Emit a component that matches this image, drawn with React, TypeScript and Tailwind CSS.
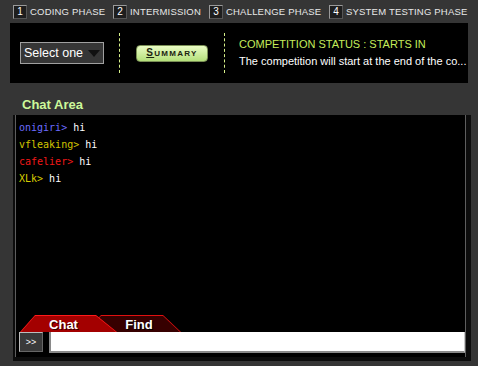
import React from 'react';

const phases = [
  { n: '1', label: 'CODING PHASE', w: 'w-[100px]' },
  { n: '2', label: 'INTERMISSION', w: 'w-[96px]' },
  { n: '3', label: 'CHALLENGE PHASE', w: 'w-[120px]' },
  { n: '4', label: 'SYSTEM TESTING PHASE', w: 'w-auto' },
];

const messages = [
  { user: 'onigiri', color: 'text-[#6b6bff]' },
  { user: 'vfleaking', color: 'text-[#d2c400]' },
  { user: 'cafelier', color: 'text-[#f01818]' },
  { user: 'XLk', color: 'text-[#d8cc00]' },
];

const PhaseItem: React.FC<{ n: string; label: string; w: string }> = ({ n, label, w }) => (
  <div className={`flex shrink-0 items-center gap-[3px] whitespace-nowrap ${w}`}>
    <div className="w-[14px] h-[14px] bg-[#1e1e1e] border border-t-[#9a9a9a] border-l-[#9a9a9a] border-r-[#555] border-b-[#555] flex items-center justify-center text-[10px] leading-none text-white">
      {n}
    </div>
    <span className="text-[9.5px] tracking-[0.2px] text-[#e8e8e8]">{label}</span>
  </div>
);

const DashedRule = () => <div className="h-[40px] border-l border-dashed border-[#d6f08a]" />;

export default function App() {
  return (
    <div className="w-[478px] h-[366px] bg-[#353535] overflow-hidden font-['Liberation_Sans',Arial,sans-serif]">
      {/* phase bar */}
      <div className="h-[23px] flex items-center pl-[13px] pt-[1px]">
        {phases.map((p) => (
          <PhaseItem key={p.n} {...p} />
        ))}
      </div>

      {/* status panel */}
      <div className="mx-[10px] h-[60px] bg-black flex items-center">
        <div className="ml-[10px] shrink-0 w-[84px] h-[22px] bg-[#363636] border border-[#a0a0a0] flex items-center pl-[3px] gap-[5px] whitespace-nowrap">
          <span className="text-[12.5px] leading-none text-white">Select one</span>
          <svg width="12" height="7" viewBox="0 0 12 7">
            <path d="M0 0 H12 L6 7 Z" fill="#111" />
          </svg>
        </div>
        <div className="ml-[15px]">
          <DashedRule />
        </div>
        <div className="ml-[16px] shrink-0 w-[72px] h-[17px] rounded-[4px] border border-[#7a8f55] bg-gradient-to-b from-[#eafcc4] to-[#b4e07a] flex items-center justify-center">
          <span className="text-[8px] font-bold tracking-[1.3px] text-[#1c2410] leading-none">
            <span className="underline text-[10px]">S</span>UMMARY
          </span>
        </div>
        <div className="ml-[16px]">
          <DashedRule />
        </div>
        <div className="ml-[14px] flex flex-col gap-[4px] whitespace-nowrap">
          <span className="text-[11px] leading-[13px] text-[#c4ec5a]">COMPETITION STATUS : STARTS IN</span>
          <span className="text-[11px] leading-[13px] text-white">The competition will start at the end of the co...</span>
        </div>
      </div>

      {/* chat title */}
      <div className="h-[32px] flex items-end pl-[22px] pb-[4px]">
        <span className="text-[13px] font-bold leading-none text-[#ccf99a]">Chat Area</span>
      </div>

      {/* chat box */}
      <div className="ml-[13px] w-[458px] h-[246px] bg-[#0c0c0c] flex flex-col pl-[2px] pr-[5px] pb-[4px]">
        <div className="flex-1 bg-black border-l border-r border-[#5e5e5e] flex flex-col pb-[4px]">
          <div className="flex-1 pl-[3px] pt-[4px] font-['DejaVu_Sans_Mono',monospace] text-[10px]">
            {messages.map((m) => (
              <div key={m.user} className="h-[17px] leading-[17px] whitespace-pre">
                <span className={m.color}>{m.user}&gt;</span>
                <span className="text-white"> hi</span>
              </div>
            ))}
          </div>

          {/* tabs */}
          <div className="flex h-[17px] pl-[4px]">
            <div className="relative z-10 w-[97px] h-[17px] bg-[#ff1a1a] [clip-path:polygon(15px_0,76px_0,97px_100%,0_100%)] pt-[1px]">
              <div className="h-full bg-[#a30000] [clip-path:polygon(15px_0,76px_0,96px_100%,1px_100%)] flex items-center justify-center pr-[10px]">
                <span className="text-[13px] font-bold text-white leading-none [text-shadow:1px_1px_0_#300]">Chat</span>
              </div>
            </div>
            <div className="-ml-[32px] w-[96px] h-[17px] bg-[#e01010] [clip-path:polygon(16px_0,78px_0,96px_100%,0_100%)] pt-[1px]">
              <div className="h-full bg-[#360000] [clip-path:polygon(16px_0,78px_0,95px_100%,1px_100%)] flex items-center justify-center pl-[12px]">
                <span className="text-[13px] font-bold text-white leading-none [text-shadow:1px_1px_0_#000]">Find</span>
              </div>
            </div>
          </div>

          {/* input row */}
          <div className="flex h-[21px] pl-[3px] gap-[6px]">
            <div className="w-[24px] h-[20px] bg-[#3a3a3a] border border-t-[#bdbdbd] border-l-[#bdbdbd] border-r-[#666] border-b-[#666] flex items-center justify-center">
              <span className="text-[9px] leading-none text-white">&gt;&gt;</span>
            </div>
            <div className="flex-1 h-[21px] bg-white border-l-2 border-b-2 border-[#8a8a8a] border-r border-r-[#c8c8c8]" />
          </div>
        </div>
      </div>
    </div>
  );
}
